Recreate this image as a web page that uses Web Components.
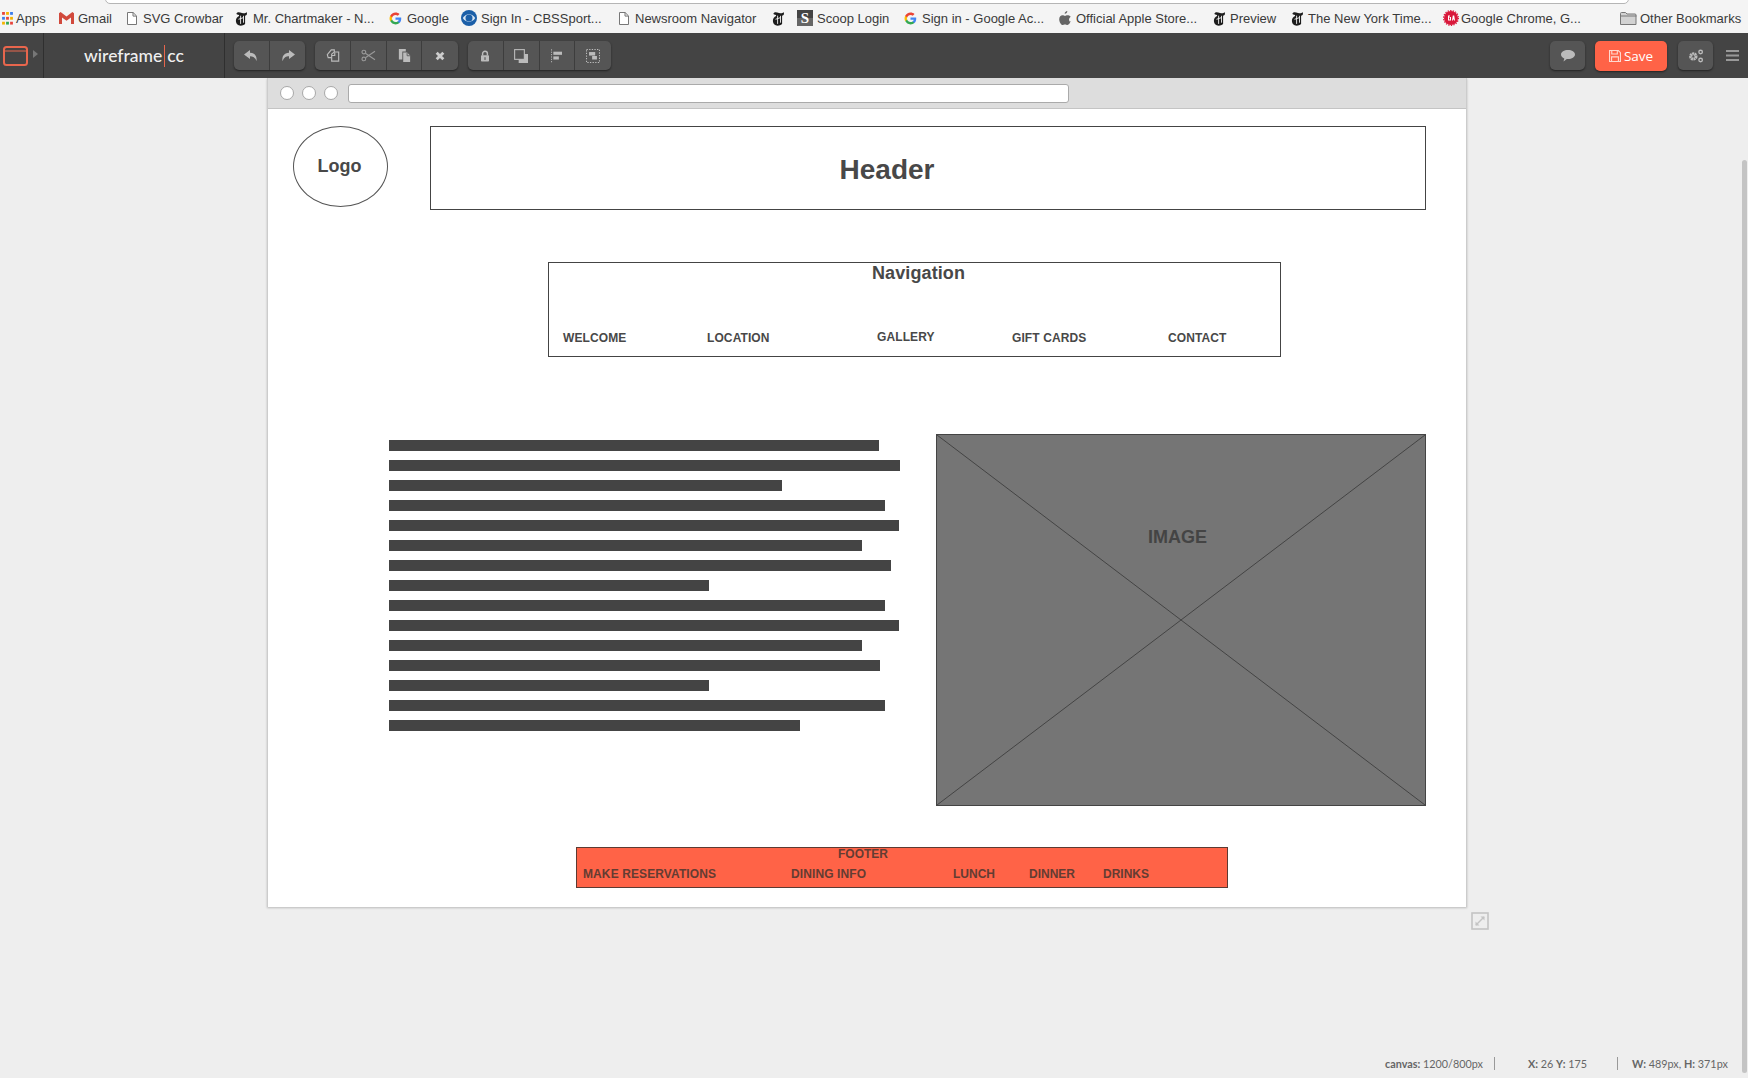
<!DOCTYPE html>
<html lang="en"><head><meta charset="utf-8"><title>wireframe.cc</title>
<style>
html,body{margin:0;height:100%;overflow:hidden}
body{display:flex;flex-direction:column;background:#eee;font-family:"Liberation Sans",Arial,sans-serif;height:1078px;position:relative}
</style></head><body>
<bookmark-bar>
  <book-mark w="57" i="apps">Apps</book-mark>
  <book-mark w="68" i="gmail">Gmail</book-mark>
  <book-mark w="108" i="doc">SVG Crowbar</book-mark>
  <book-mark w="154" i="nyt">Mr. Chartmaker - N...</book-mark>
  <book-mark w="72" i="g">Google</book-mark>
  <book-mark w="158" i="cbs" ic="20">Sign In - CBSSport...</book-mark>
  <book-mark w="153" i="doc">Newsroom Navigator</book-mark>
  <book-mark w="25" i="nyt"></book-mark>
  <book-mark w="107" i="scoop">Scoop Login</book-mark>
  <book-mark w="155" i="g">Sign in - Google Ac...</book-mark>
  <book-mark w="154" i="apple">Official Apple Store...</book-mark>
  <book-mark w="78" i="nyt" ic="17">Preview</book-mark>
  <book-mark w="152" i="nyt" ic="17">The New York Time...</book-mark>
  <book-mark w="177" i="ga">Google Chrome, G...</book-mark>
  <book-mark w="125" i="folder">Other Bookmarks</book-mark>
</bookmark-bar>
<app-toolbar>
  <tool-group><tool-btn i="undo"></tool-btn><tool-btn i="redo"></tool-btn></tool-group>
  <tool-group><tool-btn i="copy"></tool-btn><tool-btn i="cut"></tool-btn><tool-btn i="paste"></tool-btn><tool-btn i="del"></tool-btn></tool-group>
  <tool-group><tool-btn i="lock"></tool-btn><tool-btn i="front"></tool-btn><tool-btn i="align"></tool-btn><tool-btn i="group"></tool-btn></tool-group>
</app-toolbar>
<work-space>
  <wire-canvas>
    <wf-item x="25" y="18" w="95" h="81" shape="ellipse"><span style="font-size:18px;font-weight:700;position:relative;left:-1px">Logo</span></wf-item>
    <wf-item x="162" y="18" w="996" h="84" shape="box"><span style="font-size:28px;font-weight:700;position:relative;left:-41px;top:2px">Header</span></wf-item>
    <wf-item x="280" y="154" w="733" h="95" shape="box"></wf-item>
    <wf-text x="604" y="157" s="18" ls=".1">Navigation</wf-text>
    <wf-text x="295" y="222" s="12" ls=".1">WELCOME</wf-text>
    <wf-text x="439" y="222" s="12" ls=".1">LOCATION</wf-text>
    <wf-text x="609" y="221" s="12" ls=".1">GALLERY</wf-text>
    <wf-text x="744" y="222" s="12" ls=".1">GIFT CARDS</wf-text>
    <wf-text x="900" y="222" s="12" ls=".1">CONTACT</wf-text>
    <wf-bars x="121" y="332"></wf-bars>
    <wf-image x="668" y="326" w="490" h="372"></wf-image>
    <wf-item x="308" y="739" w="652" h="41" shape="footer"></wf-item>
    <wf-text x="570" y="738" s="12" c="#643c32">FOOTER</wf-text>
    <wf-text x="315" y="758" s="12" c="#643c32" ls=".1">MAKE RESERVATIONS</wf-text>
    <wf-text x="523" y="758" s="12" c="#643c32" ls=".1">DINING INFO</wf-text>
    <wf-text x="685" y="758" s="12" c="#643c32">LUNCH</wf-text>
    <wf-text x="761" y="758" s="12" c="#643c32">DINNER</wf-text>
    <wf-text x="835" y="758" s="12" c="#643c32">DRINKS</wf-text>
  </wire-canvas>
  <status-bar></status-bar>
</work-space>
<script>
const ICONS={
apps:`<svg width="11" height="13" viewBox="0 0 10 12"><g><rect x="0" y="0" width="2.6" height="2.6" fill="#e8453c"/><rect x="3.7" y="0" width="2.6" height="2.6" fill="#f4b400"/><rect x="7.4" y="0" width="2.6" height="2.6" fill="#3b7ded"/><rect x="0" y="4.5" width="2.6" height="2.6" fill="#3b7ded"/><rect x="3.7" y="4.5" width="2.6" height="2.6" fill="#e8453c"/><rect x="7.4" y="4.5" width="2.6" height="2.6" fill="#f4b400"/><rect x="0" y="9" width="2.6" height="2.6" fill="#f4b400"/><rect x="3.7" y="9" width="2.6" height="2.6" fill="#34a853"/><rect x="7.4" y="9" width="2.6" height="2.6" fill="#e8453c"/></g></svg>`,
gmail:`<svg width="15" height="12" viewBox="0 0 15 12"><path d="M0 1.2V12h3V5.4l4.5 3.4L12 5.4V12h3V1.2L13.4 0 7.5 4.6 1.6 0z" fill="#d1493c"/></svg>`,
doc:`<svg width="10" height="13" viewBox="0 0 10 13"><path d="M.5.5h5.6l3.4 3.4v8.6H.5zM6 .5v3.6h3.5" fill="#fff" stroke="#777"/></svg>`,
nyt:`<svg width="14" height="15" viewBox="0 0 14 15"><path d="M1.4 2.6C2.6.6 4.6 1.4 7 2c1.900.5 3.400.7 4.400-1 1.300 1.800.4 3.500-1.300 3.700v8.200c-1.300 1-2.900 1.700-4.400 1.800C2.800 14.700.8 12.500.9 9.500c.1-2.200 1.400-3.700 3.200-4.500L4 4C2.700 3.900 1.600 3.600 1.400 2.600z" fill="#1d1d1d"/><path d="M5.600 4.700v8.200M8.500 4.800v6.900M3.500 8.300l5-1.700" stroke="#f4f4f4" stroke-width=".9" fill="none"/></svg>`,
g:`<svg width="13" height="13" viewBox="0 0 24 24"><path d="M22.600 12.300c0-.8-.1-1.500-.2-2.300H12v4.300h6c-.3 1.400-1 2.500-2.200 3.300v2.800h3.500c2.100-1.900 3.300-4.700 3.300-8.100z" fill="#4285f4"/><path d="M12 23c3 0 5.400-1 7.300-2.700l-3.500-2.800c-1 .7-2.300 1.100-3.800 1.100-2.900 0-5.300-2-6.200-4.600H2.200v2.800C4 20.500 7.700 23 12 23z" fill="#34a853"/><path d="M5.800 14c-.2-.7-.4-1.300-.4-2s.1-1.400.4-2V7.100H2.200C1.400 8.600 1 10.200 1 12s.4 3.400 1.200 4.900z" fill="#fbbc05"/><path d="M12 5.400c1.600 0 3.100.6 4.200 1.600l3.200-3.200C17.400 2 15 1 12 1 7.700 1 4 3.500 2.200 7.100L5.800 10c.9-2.600 3.300-4.600 6.200-4.600z" fill="#ea4335"/></svg>`,
cbs:`<svg width="16" height="16" viewBox="0 0 16 16"><circle cx="8" cy="8" r="8" fill="#1b5fa8"/><path d="M1.800 8C3.300 5.500 5.500 4.200 8 4.200S12.700 5.500 14.200 8C12.700 10.500 10.500 11.800 8 11.800S3.300 10.500 1.800 8z" fill="#dbe8f5"/><circle cx="8" cy="8" r="3.500" fill="#1b5fa8"/></svg>`,
scoop:`<span style="display:inline-block;width:16px;height:16px;background:linear-gradient(#444 0 50%,#666 50%);color:#fff;font:700 15px/16px 'Liberation Serif',serif;text-align:center">S</span>`,
apple:`<svg width="12" height="14" viewBox="0 0 12 14"><path d="M8.300 0c.1 1.500-1.200 2.900-2.600 2.800C5.500 1.400 7 .1 8.300 0zM11.800 10c-.7 1.700-2 4-3.300 4-1 0-1.300-.6-2.500-.6S4.300 14 3.400 14C2 14 .2 11 .2 8.300c0-2.600 1.700-4 3.300-4 1 0 1.900.7 2.500.7s1.600-.8 2.800-.7c.5 0 2 .2 2.900 1.500-2.400 1.500-2 4.700.1 5.200z" fill="#666"/></svg>`,
ga:`<svg width="16" height="16" viewBox="0 0 16 16"><circle cx="8" cy="8" r="7" fill="#d9183b"/><circle cx="8" cy="8" r="7.400" fill="none" stroke="#d9183b" stroke-width="1.200" stroke-dasharray="1.300 1.300"/><path d="M5 5.500h2v1h-1v3h1V8h-.5V7H8v3.500H5zM9 10.500l.8-5h1.400l.8 5h-1l-.1-1h-.8l-.1 1z" fill="#fff"/></svg>`,
folder:`<svg width="17" height="13" viewBox="0 0 17 13"><path d="M.5 12.500V1.500q0-1 1-1h4l1.500 1.500h8q1 0 1 1v9.500z" fill="#d2d2d2" stroke="#777"/><path d="M.5 4h16" stroke="#777"/></svg>`,
undo:`<svg width="16" height="14" viewBox="0 0 16 14"><path d="M7 1L1 5.500 7 10V7.200c3 0 5 1 6.500 5 .6-5-1.500-8.200-6.500-8.400z" fill="#bbb"/></svg>`,
redo:`<svg width="16" height="14" viewBox="0 0 16 14"><path d="M9 1l6 4.500L9 10V7.200c-3 0-5 1-6.500 5C1.900 7.200 4 4 9 3.800z" fill="#bbb"/></svg>`,
copy:`<svg width="14" height="15" viewBox="0 0 16 16" fill="none" stroke="#bbb" stroke-width="1.300"><path d="M6.500 10.500H2.500L1.500 7 6 1.500h3.500V4"/><path d="M6.500 6.500L9.500 4H14.500V14.500H6.500z"/><path d="M6.500 8H10V4.500"/></svg>`,
cut:`<svg width="15" height="13" viewBox="0 0 16 14" fill="none" stroke="#999" stroke-width="1.200"><circle cx="3" cy="3.300" r="2"/><circle cx="3" cy="10.700" r="2"/><path d="M4.600 4.500L15 11.500M4.600 9.500L15 2.500"/></svg>`,
paste:`<svg width="13" height="15" viewBox="0 0 15 17"><path d="M1 1h8v3H5v9H1z" fill="#bbb"/><path d="M6 5h4.500L14 8.500V16H6z" fill="#bbb"/><path d="M10.500 5.500v3.300H13.800" stroke="#555" fill="none"/></svg>`,
del:`<svg width="10" height="10" viewBox="0 0 12 12"><path d="M2 2l8 8M10 2l-8 8" stroke="#ccc" stroke-width="3.400"/></svg>`,
lock:`<svg width="10" height="12" viewBox="0 0 12 15"><path d="M3 7V4.500a3 3 0 016 0V7" fill="none" stroke="#bbb" stroke-width="1.800"/><rect x="1" y="6.500" width="10" height="8" rx="1" fill="#bbb"/><rect x="5.300" y="9" width="1.400" height="3.400" fill="#555"/></svg>`,
front:`<svg width="14" height="14" viewBox="0 0 18 18"><path d="M6 13h-.5V6H13v.5H18V18H6z" fill="#bbb"/><rect x=".8" y=".8" width="12.500" height="12.500" fill="#555" stroke="#bbb" stroke-width="1.400"/></svg>`,
align:`<svg width="11" height="14" viewBox="0 0 14 17"><path d="M.7 0v17" stroke="#bbb" stroke-width="1.200" stroke-dasharray="1.500 1.500"/><rect x="3" y="3" width="11" height="4" fill="#bbb"/><rect x="3" y="9" width="7" height="4" fill="#bbb"/></svg>`,
group:`<svg width="14" height="14" viewBox="0 0 16 16"><rect x=".6" y=".6" width="14.800" height="14.800" fill="none" stroke="#bbb" stroke-width="1.200" stroke-dasharray="1.500 1.500"/><rect x="3.500" y="3.500" width="7" height="4" fill="#bbb"/><rect x="7" y="8" width="5.500" height="4" fill="#bbb"/></svg>`,
logo:`<svg width="25" height="20" viewBox="0 0 25 20" fill="none" stroke="#e8664d"><rect x="1" y="1" width="23" height="18" rx="2.500" stroke-width="2"/><path d="M1 5h23" stroke-width="1"/></svg>`,
comment:`<svg width="14" height="12" viewBox="0 0 14 12"><path d="M7 0c3.900 0 7 1.900 7 4.500S10.900 9 7 9H5.800L2.500 11.500 3.300 8.400C1.300 7.700 0 6.300 0 4.500 0 1.900 3.100 0 7 0z" fill="#bbb"/></svg>`,
save:`<svg width="12" height="12" viewBox="0 0 13 13" fill="none" stroke="#ffd9cf" stroke-width="1.200"><path d="M.6.6h9.500l2.300 2.300v9.500H.6z"/><path d="M3 .8v3.500h6V.8M2.800 12.300V7.500h7.400v4.800"/></svg>`,
gears:`<svg width="16" height="14" viewBox="0 0 18 15" fill="none" stroke="#bbb"><circle cx="6" cy="8" r="3" stroke-width="3.400" stroke-dasharray="2 .5"/><circle cx="14.200" cy="3" r="2" stroke-width="1.500"/><circle cx="14.200" cy="12" r="2" stroke-width="1.500"/></svg>`,
menu:`<svg width="13" height="11" viewBox="0 0 13 11"><path d="M0 0h13v2H0zM0 4.500h13v2H0zM0 9h13v2H0z" fill="#999"/></svg>`,
expand:`<svg width="18" height="18" viewBox="0 0 18 18" fill="none" stroke="#c4c4c4"><rect x="1" y="1" width="16" height="16" stroke-width="1.600"/><path d="M5 13l8-8" stroke-width="1.400"/><path d="M9.500 4.500H13.500V8.500" fill="#c4c4c4" stroke="none"/><path d="M4.500 9.500V13.500H8.500" fill="#c4c4c4" stroke="none"/></svg>`
};
function shell(el,html){el.attachShadow({mode:'open'}).innerHTML=html}
class BookmarkBar extends HTMLElement{connectedCallback(){shell(this,`<style>
:host{display:block;height:33px;background:#f4f4f4;box-sizing:border-box;position:relative;flex:none}
.omni{position:absolute;left:105px;top:-6px;width:1524px;height:10px;background:#fff;border:1px solid #b5b5b5;border-radius:0 0 5px 5px;box-sizing:border-box}
.row{display:flex;align-items:center;height:33px;padding:3px 0 0 2px;box-sizing:border-box}
</style><div class="omni"></div><div class="row"><slot></slot></div>`)}}
class BookMark extends HTMLElement{connectedCallback(){
const w=this.getAttribute('w'),i=this.getAttribute('i');
const widths={apps:14,gmail:19,doc:16,nyt:18,g:18,cbs:19,scoop:20,apple:17,ga:18,folder:20};
const ic=this.getAttribute('ic')||widths[i];
shell(this,`<style>
:host{display:flex;align-items:center;flex:none;width:${w}px;height:20px;font:13px "Liberation Sans",Arial,sans-serif;color:#3a3a3a;white-space:nowrap}
.ic{display:flex;align-items:center;width:${ic}px;flex:none;height:16px}
</style><span class="ic">${ICONS[i]}</span><slot></slot>`)}}
class AppToolbar extends HTMLElement{connectedCallback(){shell(this,`<style>
:host{display:flex;height:45px;background:#444;flex:none;align-items:stretch;position:relative;z-index:2}
.brandicon{width:44px;border-right:1px solid #2f2f2f;display:flex;align-items:center;padding-left:3px;box-sizing:border-box;gap:5px;flex:none}
.arrow{width:0;height:0;border-left:5px solid #777;border-top:4px solid transparent;border-bottom:4px solid transparent;margin-top:-4px}
.brand{width:181px;flex:none;border-right:1px solid #2f2f2f;box-sizing:border-box;display:flex;align-items:center;padding-left:40px;color:#f0f0f0;font:500 17.500px Lato,sans-serif}
.brand i{display:inline-block;width:1px;height:22px;background:#e8664d;margin:0 2px 0 2px}
.tools{display:flex;align-items:center;gap:10px;padding-left:9px;flex:1}
.right{display:flex;align-items:center;padding-right:9px}
.rb{width:35px;height:29px;background:#555;border-radius:5px;box-shadow:0 1px 2px #222;display:flex;align-items:center;justify-content:center}
.save{width:72px;height:30px;margin:0 11px 0 10px;background:#ff6347;border-radius:5px;box-shadow:0 1px 2px #222;display:flex;align-items:center;justify-content:center;gap:3px;color:#fff;font:13.500px "Open Sans",sans-serif}
.menu{margin-left:13px;display:flex}
</style>
<div class="brandicon">${ICONS.logo}<span class="arrow"></span></div>
<div class="brand">wireframe<i></i>cc</div>
<div class="tools"><slot></slot></div>
<div class="right"><div class="rb">${ICONS.comment}</div><div class="save">${ICONS.save}<span>Save</span></div><div class="rb">${ICONS.gears}</div><div class="menu">${ICONS.menu}</div></div>`)}}
class ToolGroup extends HTMLElement{connectedCallback(){shell(this,`<style>
:host{display:flex;height:29px;background:#555;border-radius:5px;box-shadow:0 1px 2px #222;overflow:hidden}
</style><slot></slot>`)}}
class ToolBtn extends HTMLElement{connectedCallback(){shell(this,`<style>
:host{display:flex;width:35.700px;align-items:center;justify-content:center;box-sizing:border-box;border-right:1px solid #3d3d3d}
:host(:last-child){border-right:0}
</style>${ICONS[this.getAttribute('i')]}`)}}
class WorkSpace extends HTMLElement{connectedCallback(){shell(this,`<style>
:host{display:flex;flex-direction:column;flex:1;min-height:0;position:relative;background:#eee}
.thumb{position:absolute;right:1px;top:82px;bottom:5px;width:5px;border-radius:3px;background:#c4c4c4}
</style><div class="thumb"></div><slot></slot>`)}}
class WireCanvas extends HTMLElement{connectedCallback(){shell(this,`<style>
:host{display:block;margin-left:267px;width:1200px;flex:none;position:relative}
.sheet{background:#fff;border:solid #ccc;border-width:0 1px;box-shadow:0 1px 2px #bbb;box-sizing:border-box}
.chrome{height:31px;background:#ddd;border-bottom:1px solid #c4c4c4;box-sizing:border-box;display:flex;align-items:center;padding-left:12px;gap:8px}
.dot{width:14px;height:14px;border-radius:50%;background:#fff;border:1px solid #a8a8a8;box-sizing:border-box}
.url{width:721px;height:19px;background:#fff;border:1px solid #aaa;border-radius:3px;box-sizing:border-box;margin-left:2px}
.stage{position:relative;height:799px;margin-top:-1px}
.expand{position:absolute;left:1204px;top:834px;display:flex}
</style><div class="sheet"><div class="chrome"><span class="dot"></span><span class="dot"></span><span class="dot"></span><span class="url"></span></div><div class="stage"><slot></slot></div></div><div class="expand">${ICONS.expand}</div>`)}}
const place=e=>`left:${e.getAttribute('x')}px;top:${e.getAttribute('y')}px;`;
class WfItem extends HTMLElement{connectedCallback(){
const s=this.getAttribute('shape');
const extra={ellipse:'border-radius:50%;border:1px solid #555',box:'border:1px solid #444',footer:'border:1px solid #5c3a32;background:#ff6347'}[s];
shell(this,`<style>
:host{position:absolute;${place(this)}width:${this.getAttribute('w')}px;height:${this.getAttribute('h')}px;box-sizing:border-box;${extra};display:flex;align-items:center;justify-content:center;color:#484848;font-family:"Liberation Sans",Arial,sans-serif}
</style><slot></slot>`)}}
class WfText extends HTMLElement{connectedCallback(){
shell(this,`<style>
:host{position:absolute;${place(this)}font:700 ${this.getAttribute('s')}px/16px "Liberation Sans",Arial,sans-serif;letter-spacing:${this.getAttribute('ls')||0}px;color:${this.getAttribute('c')||'#484848'};white-space:nowrap}
</style><slot></slot>`)}}
class WfBars extends HTMLElement{connectedCallback(){
const widths=[490,511,393,496,510,473,502,320,496,510,473,491,320,496,411];
shell(this,`<style>
:host{position:absolute;${place(this)}display:flex;flex-direction:column;gap:9px}
i{display:block;height:11px;background:#444}
</style>${widths.map(w=>`<i style="width:${w}px"></i>`).join('')}`)}}
class WfImage extends HTMLElement{connectedCallback(){
shell(this,`<style>
:host{position:absolute;${place(this)}width:${this.getAttribute('w')}px;height:${this.getAttribute('h')}px;background:#757575;border:1px solid #444;box-sizing:border-box}
svg{position:absolute;inset:0;width:100%;height:100%}
b{position:absolute;left:211px;top:92px;font:700 18px/20px "Liberation Sans",Arial,sans-serif;color:#444}
</style><svg viewBox="0 0 488 370" preserveAspectRatio="none"><path d="M0 0L488 370M488 0L0 370" stroke="#444" fill="none"/></svg><b>IMAGE</b>`)}}
class StatusBar extends HTMLElement{connectedCallback(){shell(this,`<style>
:host{margin-top:auto;height:30px;flex:none;display:flex;align-items:center;box-sizing:border-box;padding:0 0 0 1385px;font:10.800px Lato,sans-serif;color:#666;white-space:nowrap}
b{font-weight:700}
span{display:block}
.sep{width:1px;height:13px;background:#999}
</style><span style="width:109px"><b>canvas:</b> 1200/800px</span><span class="sep"></span><span style="margin-left:33px;width:89px"><b>X:</b> 26 <b>Y:</b> 175</span><span class="sep"></span><span style="margin-left:14px"><b>W:</b> 489px, <b>H:</b> 371px</span>`)}}
const defs={'bookmark-bar':BookmarkBar,'book-mark':BookMark,'app-toolbar':AppToolbar,'tool-group':ToolGroup,'tool-btn':ToolBtn,'work-space':WorkSpace,'wire-canvas':WireCanvas,'wf-item':WfItem,'wf-text':WfText,'wf-bars':WfBars,'wf-image':WfImage,'status-bar':StatusBar};
for(const k in defs)customElements.define(k,defs[k]);
</script>
</body></html>
